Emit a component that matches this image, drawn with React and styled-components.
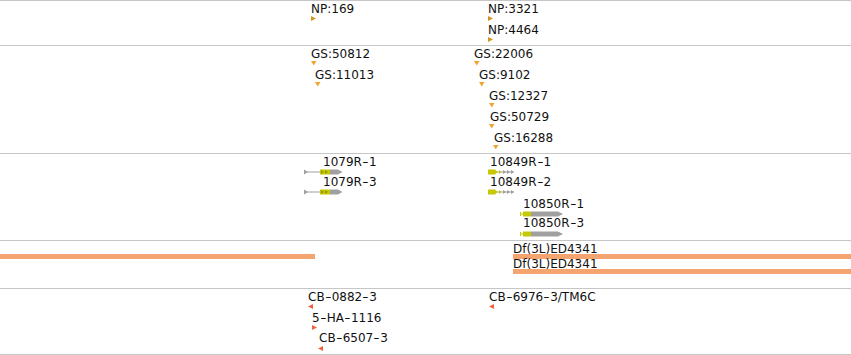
import React from "react";
import styled, { createGlobalStyle } from "styled-components";

const Global = createGlobalStyle`
  html, body { margin: 0; padding: 0; background: #ffffff; }
  body { font-family: "DejaVu Sans", Verdana, sans-serif; overflow: hidden; }
`;

const Browser = styled.div`
  width: 851px;
  display: flex;
  flex-direction: column;
  background: #fff;
`;

const Track = styled.div`
  position: relative;
  height: ${(p) => p.$h}px;
  border-top: 1px solid #c6c6c6;
  overflow: hidden;
  &:last-child { border-bottom: 1px solid #c6c6c6; }
`;

const Feature = styled.div`
  position: absolute;
  left: ${(p) => p.$x}px;
  top: ${(p) => p.$y}px;
  display: flex;
  flex-direction: column;
  align-items: flex-start;
`;

const Label = styled.span`
  display: block;
  margin-left: ${(p) => p.$dx || 0}px;
  font-family: "DejaVu Sans", Verdana, sans-serif;
  font-size: 12px;
  line-height: 12px;
  color: #111;
  white-space: nowrap;
`;

const Hyphen = styled.span`
  display: inline-block;
  width: 7px;
  text-align: center;
  transform: scaleX(1.45);
`;

const GlyphBox = styled.div`
  display: flex;
  margin-left: ${(p) => p.$dx || 0}px;
  margin-top: ${(p) => p.$dy}px;
  line-height: 0;
`;

const Bar = styled.div`
  width: ${(p) => p.$w}px;
  height: 5px;
  background: #f4a46e;
`;

const C = {
  np: "#d4931e",
  gs: "#f1a42e",
  cb: "#f1633c",
  gray: "#a0a0a0",
  yg: "#c6c800",
  ygDark: "#9a9c00",
};

function Tri({ dir, color }) {
  const pts = {
    right: "0,0 5,2.5 0,5",
    left: "5,0 0,2.5 5,5",
    down: "0,0 5.5,0 2.75,4.5",
  }[dir];
  return (
    <svg width="6" height="5" viewBox="0 0 6 5">
      <polygon points={pts} fill={color} />
    </svg>
  );
}

function Gene1079() {
  return (
    <svg width="39" height="6" viewBox="0 0 39 6">
      <line x1="0" y1="3" x2="16" y2="3" stroke={C.gray} strokeWidth="1" />
      <polygon points="0,0.5 4,3 0,5.5" fill={C.gray} />
      <rect x="16" y="0.5" width="10" height="5" fill={C.yg} />
      <polygon points="17,1 20,3 17,5" fill={C.ygDark} />
      <polygon points="21,1 24,3 21,5" fill={C.ygDark} />
      <polygon points="26,0.5 34,0.5 38.5,3 34,5.5 26,5.5" fill={C.gray} />
    </svg>
  );
}

function Gene10849() {
  return (
    <svg width="28" height="6" viewBox="0 0 28 6">
      <line x1="8" y1="3" x2="26" y2="3" stroke={C.gray} strokeWidth="1" />
      <polygon points="0,0.5 7,0.5 9.5,3 7,5.5 0,5.5" fill={C.yg} />
      <polygon points="11,1 13.5,3 11,5" fill={C.yg} />
      <polygon points="15,1 18,3 15,5" fill={C.gray} />
      <polygon points="19,1 22,3 19,5" fill={C.gray} />
      <polygon points="23,1 26,3 23,5" fill={C.gray} />
    </svg>
  );
}

function Gene10850() {
  return (
    <svg width="44" height="6" viewBox="0 0 44 6">
      <line x1="0" y1="3" x2="3" y2="3" stroke={C.yg} strokeWidth="1" />
      <rect x="0" y="1" width="1" height="4" fill={C.yg} />
      <rect x="3" y="0.5" width="8" height="5" fill={C.yg} />
      <polygon points="11,0.5 38,0.5 43,3 38,5.5 11,5.5" fill={C.gray} />
    </svg>
  );
}

const glyphs = {
  np: () => <Tri dir="right" color={C.np} />,
  gs: () => <Tri dir="down" color={C.gs} />,
  cbL: () => <Tri dir="left" color={C.cb} />,
  cbR: () => <Tri dir="right" color={C.cb} />,
  g1079: () => <Gene1079 />,
  g10849: () => <Gene10849 />,
  g10850: () => <Gene10850 />,
};

// page coordinates: label x, label cap-top, glyph x, glyph top
const tracks = [
  {
    top: 1,
    h: 44,
    features: [
      { label: "NP:169", lx: 311, cap: 4, gx: 311, gy: 16, g: "np" },
      { label: "NP:3321", lx: 488, cap: 4, gx: 488, gy: 16, g: "np" },
      { label: "NP:4464", lx: 488, cap: 25, gx: 488, gy: 37, g: "np" },
    ],
  },
  {
    top: 46,
    h: 107,
    features: [
      { label: "GS:50812", lx: 311, cap: 49, gx: 311, gy: 61, g: "gs" },
      { label: "GS:11013", lx: 315, cap: 70, gx: 315, gy: 82, g: "gs" },
      { label: "GS:22006", lx: 474, cap: 49, gx: 474, gy: 61, g: "gs" },
      { label: "GS:9102", lx: 479, cap: 70, gx: 479, gy: 82, g: "gs" },
      { label: "GS:12327", lx: 489, cap: 91, gx: 489, gy: 103, g: "gs" },
      { label: "GS:50729", lx: 490, cap: 112, gx: 489, gy: 124, g: "gs" },
      { label: "GS:16288", lx: 494, cap: 133, gx: 493, gy: 145, g: "gs" },
    ],
  },
  {
    top: 154,
    h: 86,
    features: [
      { label: "1079R-1", lx: 323, cap: 157, gx: 304, gy: 169, g: "g1079" },
      { label: "1079R-3", lx: 323, cap: 177, gx: 304, gy: 189, g: "g1079" },
      { label: "10849R-1", lx: 490, cap: 157, gx: 488, gy: 169, g: "g10849" },
      { label: "10849R-2", lx: 490, cap: 177, gx: 488, gy: 189, g: "g10849" },
      { label: "10850R-1", lx: 523, cap: 199, gx: 520, gy: 211, g: "g10850" },
      { label: "10850R-3", lx: 523, cap: 218, gx: 520, gy: 231, g: "g10850" },
    ],
  },
  {
    top: 241,
    h: 47,
    features: [
      { label: null, lx: 0, cap: 244, gx: 0, gy: 254, bar: 315 },
      { label: "Df(3L)ED4341", lx: 513, cap: 244, gx: 513, gy: 254, bar: 338 },
      { label: "Df(3L)ED4341", lx: 513, cap: 259, gx: 513, gy: 269, bar: 338 },
    ],
  },
  {
    top: 289,
    h: 65,
    features: [
      { label: "CB-0882-3", lx: 308, cap: 292, gx: 308, gy: 304, g: "cbL" },
      { label: "5-HA-1116", lx: 312, cap: 313, gx: 312, gy: 325, g: "cbR" },
      { label: "CB-6507-3", lx: 319, cap: 333, gx: 318, gy: 346, g: "cbL" },
      { label: "CB-6976-3/TM6C", lx: 489, cap: 292, gx: 489, gy: 304, g: "cbL" },
    ],
  },
];

function LabelText({ text }) {
  const parts = text.split("-");
  return parts.map((p, i) => (
    <React.Fragment key={i}>
      {i > 0 && <Hyphen>-</Hyphen>}
      {p}
    </React.Fragment>
  ));
}

function FeatureItem({ f, trackTop }) {
  const left = Math.min(f.lx, f.gx);
  const labelTop = f.cap - 1;
  const top = (f.label ? labelTop : f.gy) - trackTop;
  const Glyph = f.g ? glyphs[f.g] : null;
  return (
    <Feature $x={left} $y={top}>
      {f.label && (
        <Label $dx={f.lx - left}>
          <LabelText text={f.label} />
        </Label>
      )}
      <GlyphBox $dx={f.gx - left} $dy={f.label ? f.gy - (labelTop + 12) : 0}>
        {f.bar ? <Bar $w={f.bar} /> : <Glyph />}
      </GlyphBox>
    </Feature>
  );
}

export default function App() {
  return (
    <>
      <Global />
      <Browser>
        {tracks.map((t, i) => (
          <Track key={i} $h={t.h}>
            {t.features.map((f, j) => (
              <FeatureItem key={j} f={f} trackTop={t.top} />
            ))}
          </Track>
        ))}
      </Browser>
    </>
  );
}
